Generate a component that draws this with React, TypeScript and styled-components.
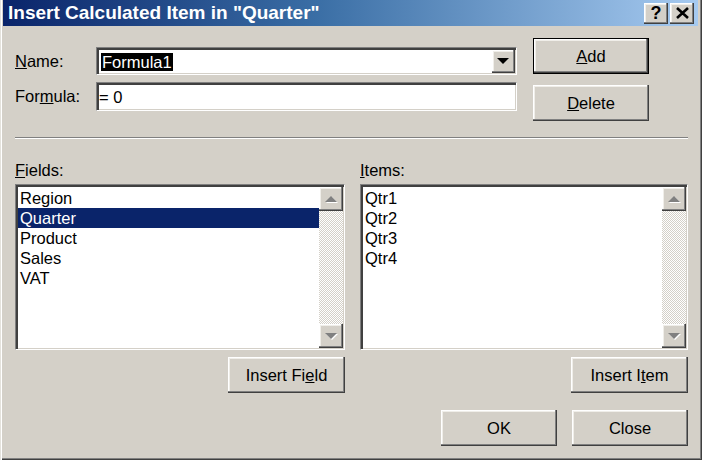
import React from 'react';
import styled, { createGlobalStyle, css } from 'styled-components';

const GlobalStyle = createGlobalStyle`
  html, body {
    margin: 0;
    padding: 0;
    background: #d4d0c8;
  }
  body {
    font-family: "Liberation Sans", Arial, sans-serif;
    font-size: 16.5px;
    color: #000;
  }
`;

const raised = css`
  background: #d4d0c8;
  box-shadow: inset -1px -1px #404040, inset -2px -2px #808080, inset 1px 1px #fff,
    inset 2px 2px #f0eee9;
`;

const sunken = css`
  box-sizing: border-box;
  border: 1px solid;
  border-color: #808080 #fff #fff #808080;
  box-shadow: inset 2px 2px #404040, inset -1px -1px #d4d0c8;
  padding: 2px 1px 1px 2px;
  background: #fff;
`;

const Window = styled.div`
  width: 702px;
  height: 460px;
  box-sizing: border-box;
  background: #d4d0c8;
  padding: 0 4px 3px 3px;
  box-shadow: inset 1px 0 #e4e2dc, inset 2px 0 #fff, inset -1px -1px #404040,
    inset -2px -2px #808080;
  display: flex;
  flex-direction: column;
  overflow: hidden;
`;

const TitleBar = styled.div`
  height: 26px;
  flex-shrink: 0;
  display: flex;
  align-items: center;
  padding-left: 5px;
  padding-right: 4px;
  background: linear-gradient(to right, #0a246a 0%, #3a6ea5 45%, #a6caf0 100%);
`;

const Title = styled.div`
  flex: 1;
  color: #fff;
  font-weight: bold;
  font-size: 19px;
  white-space: nowrap;
`;

const TitleButtons = styled.div`
  display: flex;
  gap: 2px;
`;

const CaptionButton = styled.div`
  ${raised};
  width: 24px;
  height: 21px;
  display: flex;
  align-items: center;
  justify-content: center;
  font-weight: bold;
  font-size: 18px;
  line-height: 1;
`;

const Body = styled.div`
  flex: 1;
  display: flex;
  flex-direction: column;
  padding: 12px 10px 0 12px;
`;

const TopSection = styled.div`
  display: flex;
  align-items: flex-start;
`;

const Form = styled.div`
  width: 502px;
  padding-top: 9px;
  display: flex;
  flex-direction: column;
  gap: 7px;
`;

const FieldRow = styled.div`
  display: flex;
  align-items: center;
`;

const Label = styled.div`
  width: 81px;
  line-height: 19px;
`;

const Combo = styled.div`
  ${sunken};
  width: 421px;
  height: 28px;
  display: flex;
  align-items: center;
`;

const SelectedText = styled.span`
  margin-left: 2px;
  background: #000;
  color: #fff;
  line-height: 18px;
  padding: 0 1px;
`;

const DropButton = styled.div`
  ${raised};
  margin-left: auto;
  width: 23px;
  height: 23px;
  display: flex;
  align-items: center;
  justify-content: center;
`;

const TextInput = styled.div`
  ${sunken};
  width: 421px;
  height: 29px;
  display: flex;
  align-items: center;
  padding-left: 2px;
`;

const ButtonColumn = styled.div`
  margin-left: 16px;
  display: flex;
  flex-direction: column;
  gap: 11px;
`;

const Button = styled.div<{ $w?: number; $default?: boolean }>`
  ${raised};
  box-sizing: border-box;
  width: ${({ $w }) => $w ?? 116}px;
  height: 36px;
  display: flex;
  align-items: center;
  justify-content: center;
  ${({ $default }) =>
    $default &&
    css`
      border: 1px solid #000;
    `}
`;

const Separator = styled.div`
  margin-top: 16px;
  border-top: 1px solid #808080;
  border-bottom: 1px solid #fff;
`;

const ListsSection = styled.div`
  margin-top: 22px;
  display: flex;
  gap: 15px;
`;

const ListColumn = styled.div<{ $w: number }>`
  width: ${({ $w }) => $w}px;
  display: flex;
  flex-direction: column;
`;

const GroupLabel = styled.div`
  line-height: 19px;
  margin-bottom: 4px;
`;

const ListBox = styled.div`
  ${sunken};
  height: 166px;
  display: flex;
`;

const Rows = styled.div`
  flex: 1;
  padding-top: 1px;
`;

const Row = styled.div<{ $selected?: boolean }>`
  height: 20px;
  line-height: 20px;
  padding-left: 2px;
  ${({ $selected }) =>
    $selected &&
    css`
      background: #0a246a;
      color: #fff;
    `}
`;

const ScrollBar = styled.div`
  width: 24px;
  display: flex;
  flex-direction: column;
`;

const ScrollButton = styled.div`
  ${raised};
  width: 24px;
  height: 24px;
  display: flex;
  align-items: center;
  justify-content: center;
`;

const Track = styled.div`
  flex: 1;
  background: repeating-conic-gradient(#d4d0c8 0 25%, #fff 0 50%) 0 0 / 2px 2px;
`;

const ActionRow = styled.div`
  display: flex;
  justify-content: flex-end;
  margin-top: 7px;
`;

const Footer = styled.div`
  display: flex;
  justify-content: flex-end;
  gap: 15px;
  margin-top: 17px;
`;

const Arrow = ({ dir, disabled }: { dir: 'up' | 'down'; disabled?: boolean }) => {
  const points = dir === 'up' ? '0,6 6,0 12,6' : '0,0 12,0 6,6';
  return (
    <svg width="13" height="7" viewBox="0 0 13 7">
      {disabled && <polygon points={points} fill="#fff" transform="translate(1,1)" />}
      <polygon points={points} fill={disabled ? '#808080' : '#000'} />
    </svg>
  );
};

const CloseGlyph = () => (
  <svg width="13" height="12" viewBox="0 0 13 12">
    <path d="M1 1 L12 11 M12 1 L1 11" stroke="#000" strokeWidth="2.6" />
  </svg>
);

const ScrollList = ({ rows, selected }: { rows: string[]; selected?: number }) => (
  <ListBox>
    <Rows>
      {rows.map((r, i) => (
        <Row key={r} $selected={i === selected}>
          {r}
        </Row>
      ))}
    </Rows>
    <ScrollBar>
      <ScrollButton>
        <Arrow dir="up" disabled />
      </ScrollButton>
      <Track />
      <ScrollButton>
        <Arrow dir="down" disabled />
      </ScrollButton>
    </ScrollBar>
  </ListBox>
);

export default function App() {
  return (
    <>
      <GlobalStyle />
      <Window>
        <TitleBar>
          <Title>Insert Calculated Item in "Quarter"</Title>
          <TitleButtons>
            <CaptionButton>?</CaptionButton>
            <CaptionButton>
              <CloseGlyph />
            </CaptionButton>
          </TitleButtons>
        </TitleBar>
        <Body>
          <TopSection>
            <Form>
              <FieldRow>
                <Label>
                  <u>N</u>ame:
                </Label>
                <Combo>
                  <SelectedText>Formula1</SelectedText>
                  <DropButton>
                    <Arrow dir="down" />
                  </DropButton>
                </Combo>
              </FieldRow>
              <FieldRow>
                <Label>
                  For<u>m</u>ula:
                </Label>
                <TextInput>= 0</TextInput>
              </FieldRow>
            </Form>
            <ButtonColumn>
              <Button $default>
                <span>
                  <u>A</u>dd
                </span>
              </Button>
              <Button>
                <span>
                  <u>D</u>elete
                </span>
              </Button>
            </ButtonColumn>
          </TopSection>
          <Separator />
          <ListsSection>
            <ListColumn $w={330}>
              <GroupLabel>
                <u>F</u>ields:
              </GroupLabel>
              <ScrollList rows={['Region', 'Quarter', 'Product', 'Sales', 'VAT']} selected={1} />
              <ActionRow>
                <Button $w={117}>
                  <span>
                    Insert Fi<u>e</u>ld
                  </span>
                </Button>
              </ActionRow>
            </ListColumn>
            <ListColumn $w={328}>
              <GroupLabel>
                <u>I</u>tems:
              </GroupLabel>
              <ScrollList rows={['Qtr1', 'Qtr2', 'Qtr3', 'Qtr4']} />
              <ActionRow>
                <Button $w={117}>
                  <span>
                    Insert I<u>t</u>em
                  </span>
                </Button>
              </ActionRow>
            </ListColumn>
          </ListsSection>
          <Footer>
            <Button>OK</Button>
            <Button>Close</Button>
          </Footer>
        </Body>
      </Window>
    </>
  );
}
